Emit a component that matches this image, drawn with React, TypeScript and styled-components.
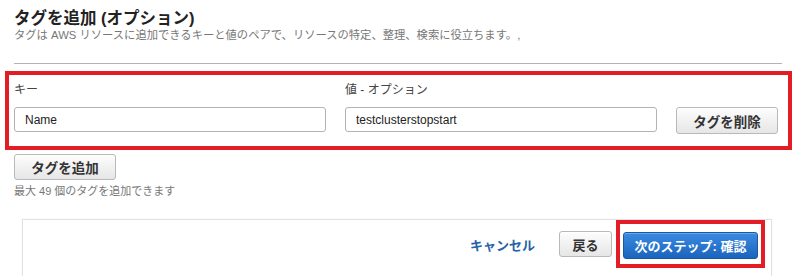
import React from "react";
import styled, { createGlobalStyle } from "styled-components";

const GlobalStyle = createGlobalStyle`
  html, body {
    margin: 0;
    padding: 0;
    background: #ffffff;
    overflow: hidden;
  }
  body {
    font-family: "Liberation Sans", "Noto Sans CJK JP", Arial, sans-serif;
    color: #333;
  }
  * { box-sizing: border-box; }
`;

const Page = styled.div`
  padding: 8px 16px 0 14px;
`;

const Title = styled.h2`
  margin: 0;
  font-size: 16.5px;
  line-height: 21px;
  font-weight: bold;
  color: #222;
`;

const Subtitle = styled.p`
  margin: 0;
  font-size: 11.3px;
  line-height: 12px;
  color: #777;
`;

const Divider = styled.hr`
  margin: 22px 0 0 0;
  border: 0;
  height: 1px;
  background: #b4b4b4;
`;

const Highlight = styled.section`
  margin: 7px -10px 0 -9px;
  border: 4px solid #e31d25;
  padding: 7px 10px 11px 5px;
`;

const TagGrid = styled.div`
  display: grid;
  grid-template-columns: 1fr 1fr 102px;
  column-gap: 19px;
  row-gap: 9px;
`;

const FieldLabel = styled.label`
  font-size: 12px;
  line-height: 16px;
  color: #444;
`;

const TextInput = styled.input`
  height: 25px;
  width: 100%;
  border: 1px solid #b3b3b3;
  border-radius: 3px;
  padding: 0 10px;
  font-family: "Liberation Sans", Arial, sans-serif;
  font-size: 12px;
  color: #222;
  background: #fff;
  outline: none;
`;

const GrayButton = styled.button<{ $w?: number; $h?: number }>`
  width: ${(p) => (p.$w ? `${p.$w}px` : "auto")};
  height: ${(p) => p.$h ?? 26}px;
  padding: 0;
  border: 1px solid #b9b9b9;
  border-radius: 3px;
  background: linear-gradient(#fdfdfd, #e6e6e6);
  box-shadow: inset 0 1px 0 #fff;
  font-family: "Liberation Sans", "Noto Sans CJK JP", sans-serif;
  font-size: 13.5px;
  font-weight: bold;
  color: #333;
  cursor: pointer;
`;

const DeleteButton = styled(GrayButton)`
  align-self: end;
  margin-bottom: 1px;
`;

const AddButton = styled(GrayButton)`
  display: block;
  margin-top: 4px;
`;

const Note = styled.div`
  margin-top: 4px;
  font-size: 11px;
  line-height: 14px;
  color: #777;
`;

const Footer = styled.footer`
  margin: 21px 10px 0 8px;
  height: 70px;
  border: 1px solid #e2e2e2;
  box-shadow: 0 0 2px rgba(0, 0, 0, 0.06);
  display: flex;
  justify-content: flex-end;
  align-items: flex-start;
  padding-right: 6px;
`;

const Actions = styled.div`
  display: flex;
  align-items: center;
  height: 48px;
`;

const CancelLink = styled.a`
  font-size: 13px;
  font-weight: bold;
  color: #2761a8;
  text-decoration: none;
  margin-right: 24px;
  cursor: pointer;
`;

const BackButton = styled(GrayButton)`
  font-size: 13px;
  margin-right: 4px;
`;

const CalloutFrame = styled.div`
  border: 4px solid #e31d25;
  padding: 8px 3px 5px 3px;
  display: flex;
`;

const PrimaryButton = styled.button`
  width: 135px;
  height: 27px;
  padding: 0;
  border: 1px solid #1a589f;
  border-radius: 3px;
  background: linear-gradient(#3a8ae0, #1b64bd);
  box-shadow: inset 0 1px 0 rgba(255, 255, 255, 0.25);
  font-family: "Liberation Sans", "Noto Sans CJK JP", sans-serif;
  font-size: 13px;
  font-weight: bold;
  color: #fff;
  cursor: pointer;
`;

export default function App() {
  return (
    <>
      <GlobalStyle />
      <Page>
        <Title>タグを追加 (オプション)</Title>
        <Subtitle>
          タグは AWS リソースに追加できるキーと値のペアで、リソースの特定、整理、検索に役立ちます。,
        </Subtitle>
        <Divider />
        <Highlight>
          <TagGrid>
            <FieldLabel>キー</FieldLabel>
            <FieldLabel>値 - オプション</FieldLabel>
            <span />
            <TextInput defaultValue="Name" />
            <TextInput defaultValue="testclusterstopstart" />
            <DeleteButton $w={102} $h={27}>
              タグを削除
            </DeleteButton>
          </TagGrid>
        </Highlight>
        <AddButton $w={102} $h={26}>
          タグを追加
        </AddButton>
        <Note>最大 49 個のタグを追加できます</Note>
        <Footer>
          <Actions>
            <CancelLink>キャンセル</CancelLink>
            <BackButton $w={53} $h={26}>
              戻る
            </BackButton>
            <CalloutFrame>
              <PrimaryButton>次のステップ: 確認</PrimaryButton>
            </CalloutFrame>
          </Actions>
        </Footer>
      </Page>
    </>
  );
}
